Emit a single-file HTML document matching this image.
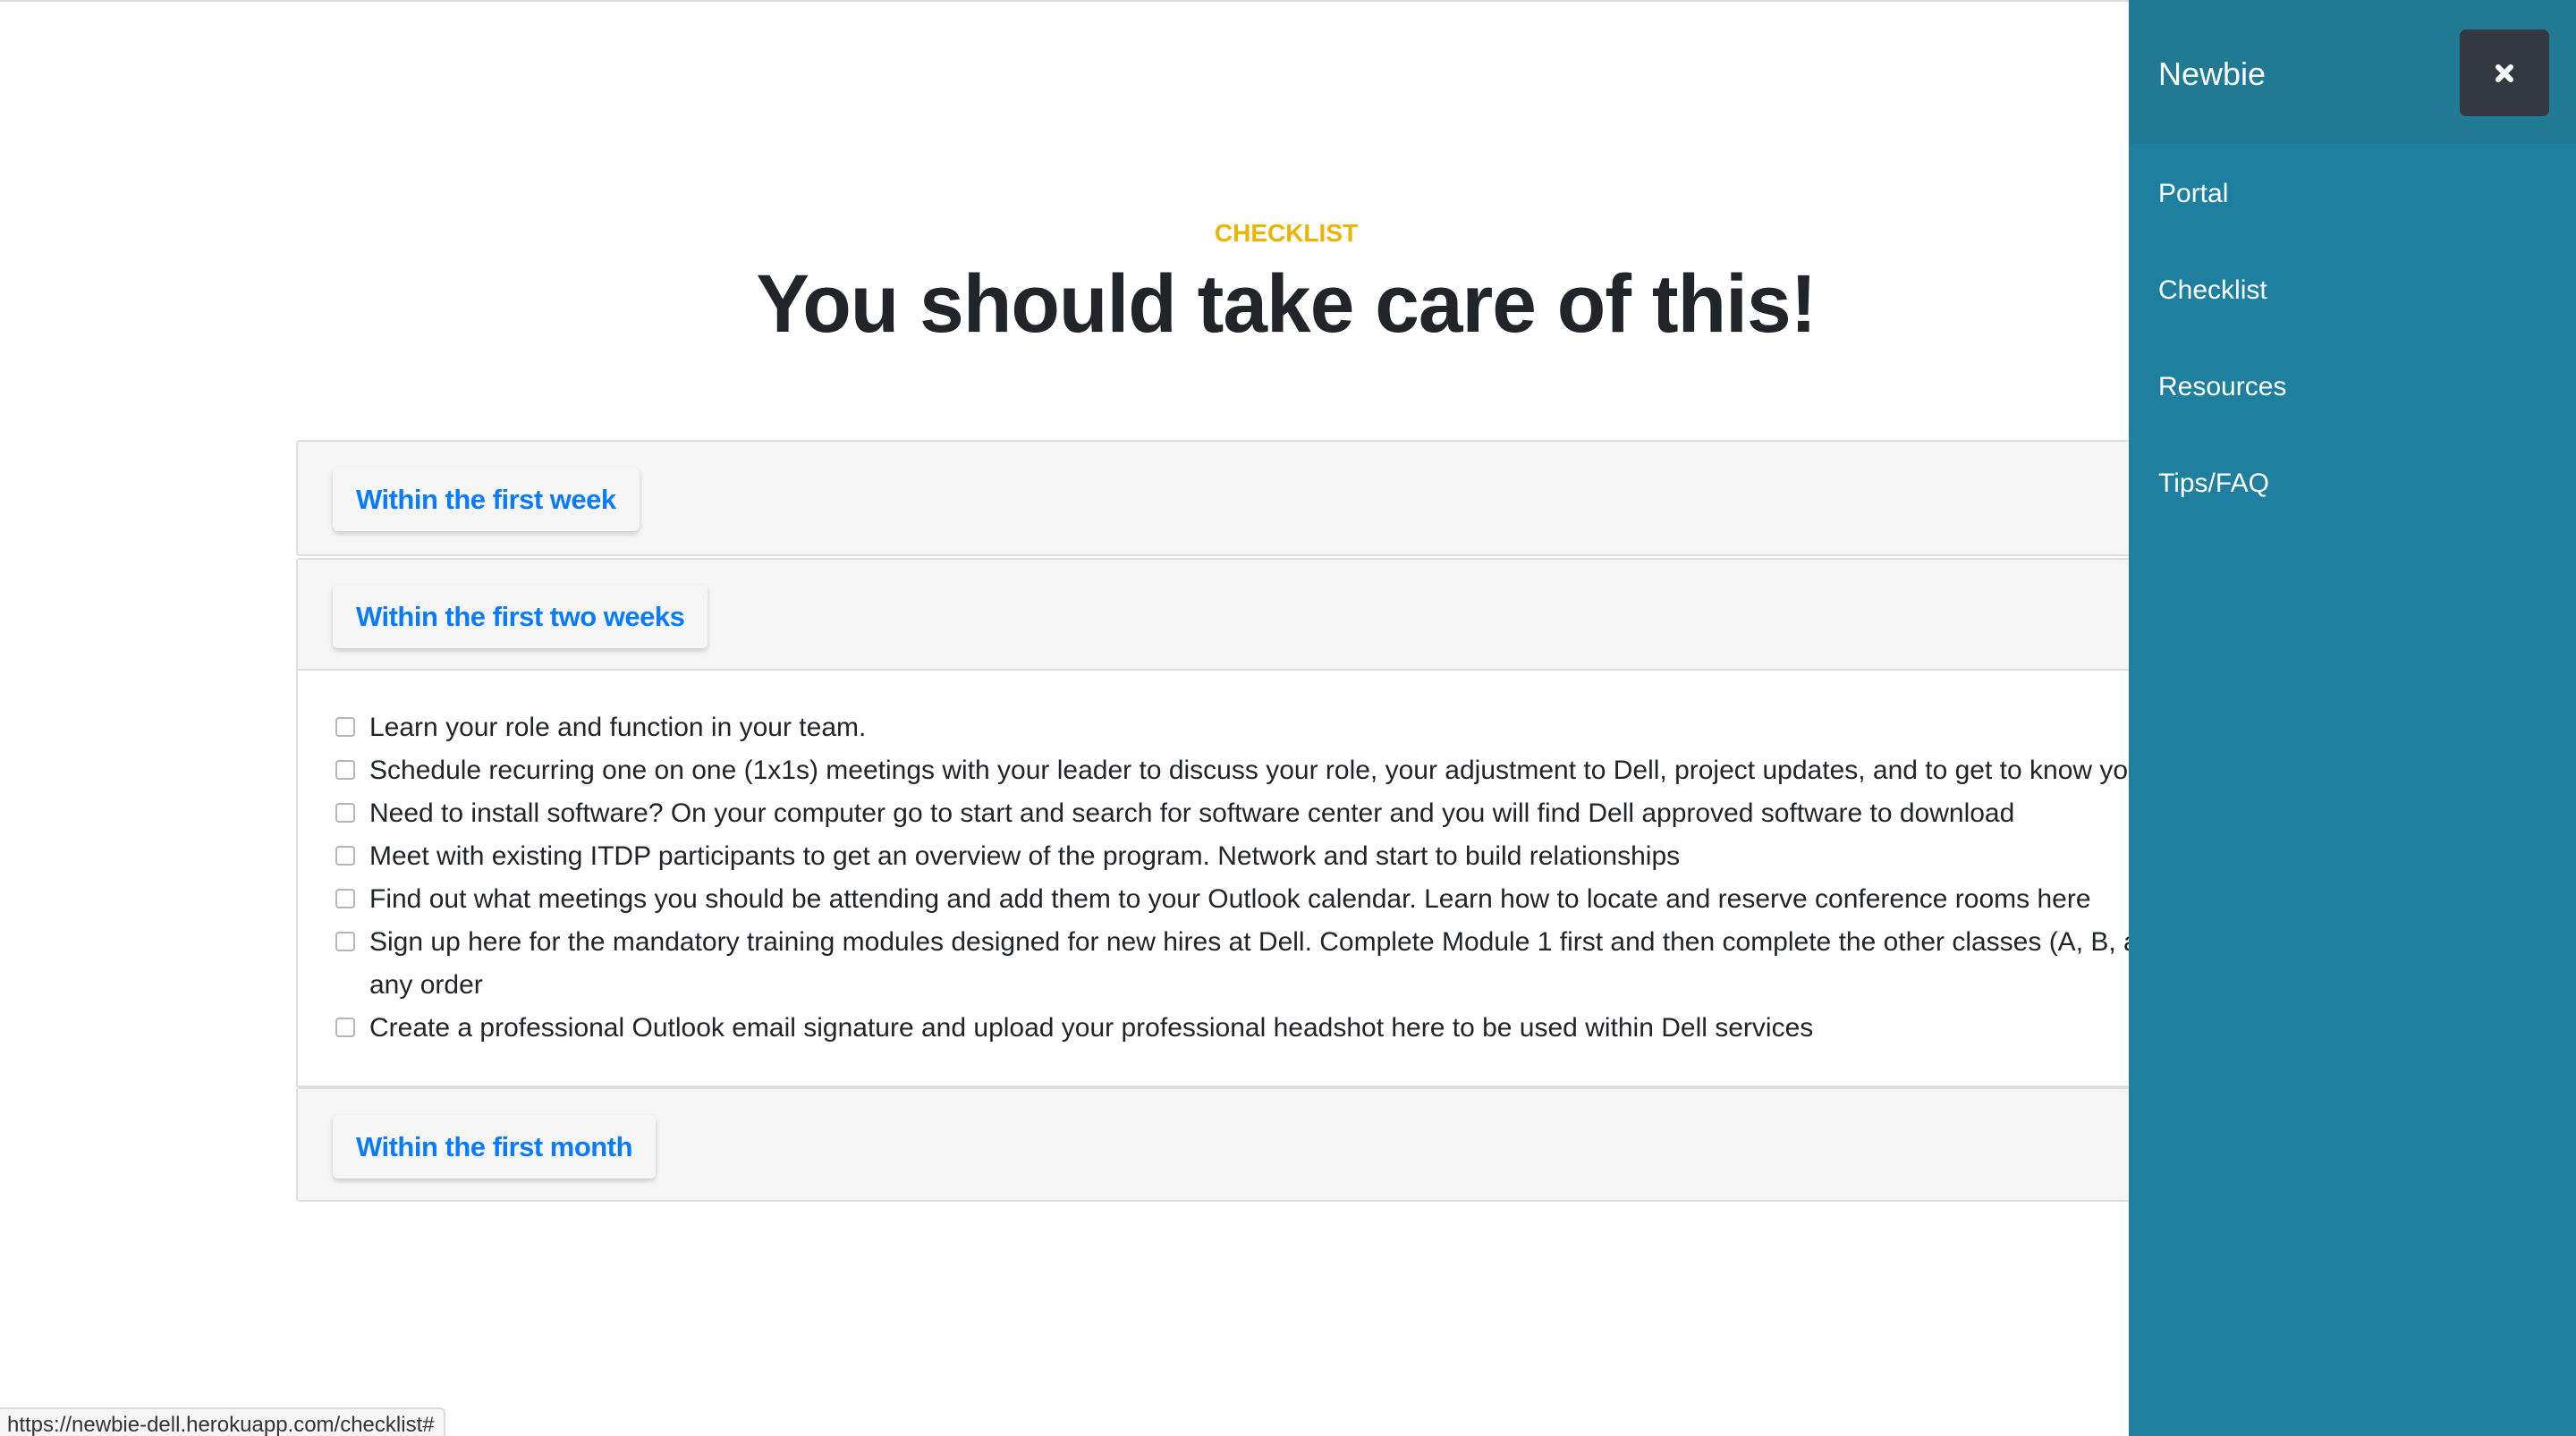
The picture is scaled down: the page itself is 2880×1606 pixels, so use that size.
<!DOCTYPE html>
<html><head><meta charset="utf-8"><style>
*{box-sizing:border-box;margin:0;padding:0}
html,body{width:2880px;height:1606px;overflow:hidden;background:#fff;font-family:"Liberation Sans",sans-serif;position:relative}
.topline{position:absolute;left:0;top:0;width:2880px;height:2px;background:#dcdcdc}
.eyebrow{position:absolute;left:0;width:2876px;top:245px;text-align:center;color:#e9b500;font-weight:bold;font-size:28px}
.title{position:absolute;left:0;width:2876px;top:285px;text-align:center;color:#212529;font-weight:bold;font-size:92px;line-height:110px}
.title span{display:inline-block;transform:scaleX(0.97);transform-origin:center;letter-spacing:-1px}
.panel{position:absolute;left:331px;width:2200px;background:#f6f6f6;border:2px solid #dedede;border-radius:4px}
.btn{position:absolute;left:39px;height:71px;background:#f6f6f6;border-radius:6px;box-shadow:0 3px 6px rgba(0,0,0,.18);color:#0a7bff;font-weight:bold;font-size:31px;line-height:71px;padding:0 26px;letter-spacing:-.5px}
.body{position:absolute;left:331px;top:748px;width:2200px;height:468px;background:#fff;border-left:2px solid #dedede;border-top:2px solid #dedede;border-bottom:2px solid #dedede}
.item{position:absolute;left:80px;font-size:30px;color:#212529;white-space:nowrap;line-height:48px}
.cb{position:absolute;left:-38px;top:12px;width:22px;height:22px;border:2px solid #b5b5b5;border-radius:4px;background:#fff}
.side{position:absolute;left:2380px;top:0;width:500px;height:1606px;background:#1e7f9e}
.sidehead{position:absolute;left:0;top:0;width:500px;height:161px;background:#207a94}
.newbie{position:absolute;left:33px;top:62px;color:#fff;font-size:36px}
.close{position:absolute;left:370px;top:33px;width:100px;height:97px;background:#343840;border-radius:7px}
.nav{position:absolute;left:33px;color:#fff;font-size:30px}
.status{position:absolute;left:0;top:1574px;width:498px;height:36px;background:#f6f6f6;border:2px solid #dcdcdc;border-left:none;border-radius:0 6px 0 0;font-size:24px;color:#333;padding:4px 0 0 8px}
</style></head><body>
<div class="topline"></div>
<div class="eyebrow">CHECKLIST</div>
<div class="title"><span>You should take care of this!</span></div>

<div class="panel" style="top:492px;height:130px"><div class="btn" style="top:29px">Within the first week</div></div>
<div class="panel" style="top:624px;height:126px;border-bottom:none"><div class="btn" style="top:28px">Within the first two weeks</div></div>
<div class="body">
 <div class="item" style="top:40px"><div class="cb"></div>Learn your role and function in your team.</div>
 <div class="item" style="top:88px"><div class="cb"></div>Schedule recurring one on one (1x1s) meetings with your leader to discuss your role, your adjustment to Dell, project updates, and to get to know you</div>
 <div class="item" style="top:136px"><div class="cb"></div>Need to install software? On your computer go to start and search for software center and you will find Dell approved software to download</div>
 <div class="item" style="top:184px"><div class="cb"></div>Meet with existing ITDP participants to get an overview of the program. Network and start to build relationships</div>
 <div class="item" style="top:232px"><div class="cb"></div>Find out what meetings you should be attending and add them to your Outlook calendar. Learn how to locate and reserve conference rooms here</div>
 <div class="item" style="top:280px"><div class="cb"></div>Sign up here for the mandatory training modules designed for new hires at Dell. Complete Module 1 first and then complete the other classes (A, B, and C) in</div>
 <div class="item" style="top:328px">any order</div>
 <div class="item" style="top:376px"><div class="cb"></div>Create a professional Outlook email signature and upload your professional headshot here to be used within Dell services</div>
</div>
<div class="panel" style="top:1216px;height:128px"><div class="btn" style="top:29px">Within the first month</div></div>

<div class="side">
 <div class="sidehead"><div class="newbie">Newbie</div>
  <div class="close"><svg width="100" height="97" viewBox="0 0 100 97"><path d="M43 42 L57 56 M57 42 L43 56" stroke="#fff" stroke-width="6" stroke-linecap="round"/></svg></div>
 </div>
 <div class="nav" style="top:200px">Portal</div>
 <div class="nav" style="top:308px">Checklist</div>
 <div class="nav" style="top:416px">Resources</div>
 <div class="nav" style="top:524px">Tips/FAQ</div>
</div>
<div class="status">https://newbie-dell.herokuapp.com/checklist#</div>
</body></html>
